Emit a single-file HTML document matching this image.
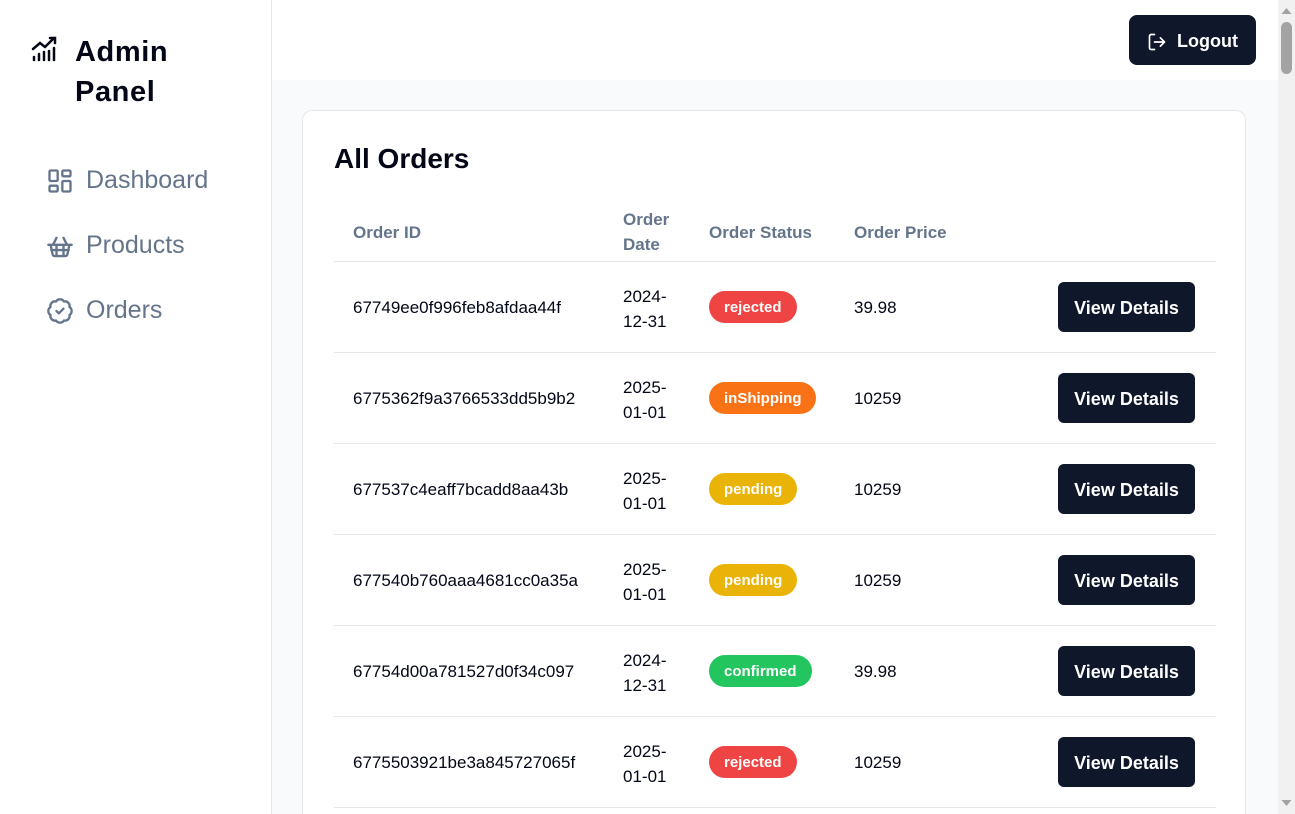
<!DOCTYPE html>
<html style="overflow:hidden;height:814px"><head><meta charset="utf-8"><style>
*{box-sizing:border-box;margin:0;padding:0}
body{width:1295px;height:814px;overflow:hidden;font-family:"Liberation Sans",sans-serif;background:#fff;position:relative}
.side{position:absolute;left:0;top:0;width:272px;height:814px;border-right:1px solid #e5e7eb;background:#fff}
.logo{position:absolute;left:31px;top:32px;display:flex;font-weight:900;font-size:29px;line-height:40px;color:#020617;letter-spacing:0.6px}
.logo svg{margin-top:2px;margin-right:12px}
.nav{position:absolute;left:46px;display:flex;align-items:center;color:#64748b;font-size:25px}
.nav svg{margin-right:12px}
.main{position:absolute;left:272px;top:80px;width:1006px;height:734px;background:#f8fafc}
.logout{position:absolute;left:1129px;top:15px;width:127px;height:50px;background:#0f172a;border-radius:8px;color:#fff;font-weight:bold;font-size:18px;display:flex;align-items:center;justify-content:center;gap:10px;padding-top:3px}
.card{position:absolute;left:302px;top:110px;width:944px;height:704px;background:#fff;border:1px solid #e5e7eb;border-bottom:none;border-radius:10px 10px 0 0;overflow:hidden}
h1{position:absolute;left:31px;top:32px;font-size:28px;font-weight:600;color:#020617}
.th{position:absolute;color:#64748b;font-size:17px;font-weight:600;line-height:25px}
.row{position:absolute;left:31px;width:882px;height:91px;border-top:1px solid #e5e7eb;font-size:17px;color:#020617}
.row div{position:absolute}
.id{left:19px;top:36px}
.dt{left:289px;top:22px;line-height:25px}
.st{left:375px;top:29px;height:32px;border-radius:16px;color:#fff;font-size:15px;font-weight:bold;line-height:34px;padding:0 15px}
.pr{left:520px;top:36px}
.btn{left:724px;top:20px;width:137px;height:50px;background:#0f172a;border-radius:6px;color:#fff;font-weight:bold;font-size:18px;line-height:52px;text-align:center}
.sb{position:absolute;left:1278px;top:0;width:17px;height:814px;background:#f1f1f1}
</style></head><body>
<div class="side">
<div class="logo"><svg width="32" height="28" viewBox="0 0 32 28" fill="none" stroke="#020617" stroke-width="2.5" stroke-linecap="round"><path d="M3 26v-3M8 26v-6M13 26v-8M18 26v-9M23 26v-12M2 15l7-6 5 4 9-9M19 4h5v5"/></svg><div>Admin<br>Panel</div></div>
<div class="nav" style="top:166px"><svg width="28" height="28" viewBox="0 0 24 24" fill="none" stroke="#64748b" stroke-width="2"><rect x="3" y="3" width="7" height="9" rx="1"/><rect x="14" y="3" width="7" height="5" rx="1"/><rect x="14" y="12" width="7" height="9" rx="1"/><rect x="3" y="16" width="7" height="5" rx="1"/></svg>Dashboard</div>
<div class="nav" style="top:231px"><svg width="28" height="28" viewBox="0 0 24 24" fill="none" stroke="#64748b" stroke-width="2" stroke-linecap="round"><path d="M15 5l3 6M9 5l-3 6M2 11h20M4 11l1.6 8a2 2 0 0 0 2 1.6h8.8a2 2 0 0 0 2-1.6L20 11M9 11v9M15 11v9M4.5 15.5h15"/></svg>Products</div>
<div class="nav" style="top:296px"><svg width="28" height="28" viewBox="0 0 24 24" fill="none" stroke="#64748b" stroke-width="2" stroke-linecap="round" stroke-linejoin="round"><path d="M3.85 8.62a4 4 0 0 1 4.78-4.77 4 4 0 0 1 6.74 0 4 4 0 0 1 4.78 4.78 4 4 0 0 1 0 6.74 4 4 0 0 1-4.77 4.78 4 4 0 0 1-6.75 0 4 4 0 0 1-4.78-4.77 4 4 0 0 1 0-6.76Z"/><path d="m9 12 2 2 4-4"/></svg>Orders</div>
</div>
<div class="logout"><svg width="20" height="20" viewBox="0 0 24 24" fill="none" stroke="#fff" stroke-width="2" stroke-linecap="round" stroke-linejoin="round"><path d="M9 21H5a2 2 0 0 1-2-2V5a2 2 0 0 1 2-2h4M16 17l5-5-5-5M21 12H9"/></svg>Logout</div>
<div class="main"></div>
<div class="card">
<h1>All Orders</h1>
<div class="th" style="left:50px;top:109px">Order ID</div>
<div class="th" style="left:320px;top:96px">Order<br>Date</div>
<div class="th" style="left:406px;top:109px">Order Status</div>
<div class="th" style="left:551px;top:109px">Order Price</div>
<div class="row" style="top:150px"><div class="id">67749ee0f996feb8afdaa44f</div><div class="dt">2024-<br>12-31</div><div class="st" style="background:#ef4444">rejected</div><div class="pr">39.98</div><div class="btn">View Details</div></div>
<div class="row" style="top:241px"><div class="id">6775362f9a3766533dd5b9b2</div><div class="dt">2025-<br>01-01</div><div class="st" style="background:#f97316">inShipping</div><div class="pr">10259</div><div class="btn">View Details</div></div>
<div class="row" style="top:332px"><div class="id">677537c4eaff7bcadd8aa43b</div><div class="dt">2025-<br>01-01</div><div class="st" style="background:#eab308">pending</div><div class="pr">10259</div><div class="btn">View Details</div></div>
<div class="row" style="top:423px"><div class="id">677540b760aaa4681cc0a35a</div><div class="dt">2025-<br>01-01</div><div class="st" style="background:#eab308">pending</div><div class="pr">10259</div><div class="btn">View Details</div></div>
<div class="row" style="top:514px"><div class="id">67754d00a781527d0f34c097</div><div class="dt">2024-<br>12-31</div><div class="st" style="background:#22c55e">confirmed</div><div class="pr">39.98</div><div class="btn">View Details</div></div>
<div class="row" style="top:605px"><div class="id">6775503921be3a845727065f</div><div class="dt">2025-<br>01-01</div><div class="st" style="background:#ef4444">rejected</div><div class="pr">10259</div><div class="btn">View Details</div></div>
<div class="row" style="top:696px"></div>
</div>
<div class="sb"><svg width="17" height="814"><path d="M3.5 14l5-6 5 6z" fill="#a3a3a3"/><rect x="3" y="22" width="11" height="52" rx="5.5" fill="#a3a3a3"/><path d="M3.5 800l5 6 5-6z" fill="#a3a3a3"/></svg></div>
</body></html>
